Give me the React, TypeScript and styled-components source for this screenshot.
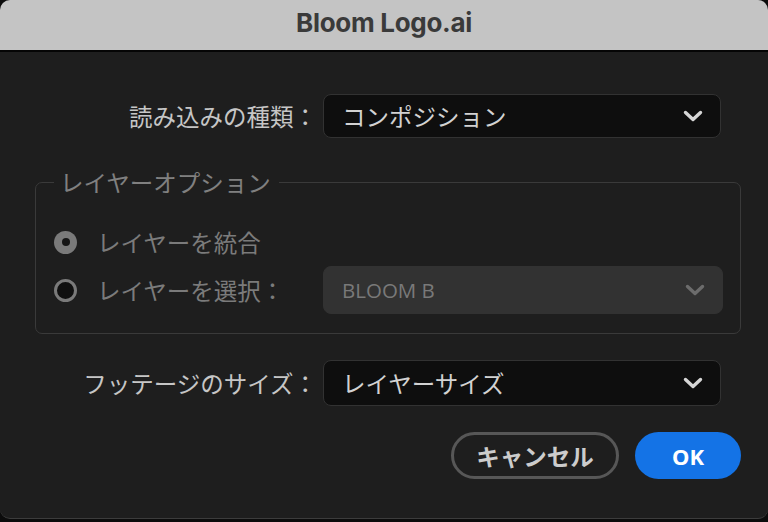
import React from 'react';
import styled, { createGlobalStyle } from 'styled-components';

const GlobalStyle = createGlobalStyle`
  html, body {
    margin: 0;
    padding: 0;
    background: #0c0c0c;
  }

  body {
    font-family: 'Noto Sans', 'Noto Sans CJK JP', sans-serif;
  }
`;

const Window = styled.div`
  width: 768px;
  height: 519px;
  box-sizing: border-box;
  background: #1e1e1e;
  border-bottom: 1px solid #3c3c3c;
  border-radius: 10px;
  overflow: hidden;

  display: flex;
  flex-direction: column;
`;

const TitleBar = styled.div`
  height: 52px;
  flex-shrink: 0;
  box-sizing: border-box;
  padding-bottom: 5px;
  background: #c4c4c4;
  border-bottom: 2px solid #050505;

  display: flex;
  justify-content: center;
  align-items: center;

  font-family: Inter, 'Noto Sans', sans-serif;
  font-size: 26px;
  font-weight: 700;
  color: #3a3a3a;
  letter-spacing: -0.3px;
`;

const Body = styled.div`
  padding: 42px 27px 0 35px;

  display: flex;
  flex-direction: column;
`;

const FieldRow = styled.div<{ $top?: number }>`
  margin-top: ${(props) => props.$top ?? 0}px;
  padding-right: 20px;

  display: flex;
  justify-content: flex-end;
  align-items: center;
  gap: 6px;
`;

const Label = styled.span<{ $dim?: boolean }>`
  font-family: 'Noto Sans CJK JP', sans-serif;
  font-size: 23.5px;
  color: ${(props) => (props.$dim ? '#7b7b7b' : '#c6c6c6')};
  white-space: nowrap;
`;

const Select = styled.div<{ $disabled?: boolean; $h?: number; $w?: number }>`
  width: ${(props) => props.$w ?? 398}px;
  height: ${(props) => props.$h ?? 44}px;
  flex-shrink: 0;
  box-sizing: border-box;
  padding: 0 17px 0 18px;

  display: flex;
  align-items: center;
  justify-content: space-between;

  background: ${(props) => (props.$disabled ? '#323232' : '#0e0e0e')};
  border: 1px solid #323232;
  border-radius: 8px;

  color: ${(props) => (props.$disabled ? '#797979' : '#d2d2d2')};
  font-family: 'Noto Sans CJK JP', sans-serif;
  font-size: 23.5px;

  svg {
    flex-shrink: 0;
  }
`;

const SelectLatin = styled.span`
  font-family: 'Open Sans', 'Noto Sans', sans-serif;
  font-size: 20.5px;
`;

const Group = styled.fieldset`
  margin: 29px 0 0 0;
  padding: 20px 17px 19px 18px;
  border: 1.5px solid #3a3a3a;
  border-radius: 7px;
  min-width: 0;

  display: flex;
  flex-direction: column;
`;

const Legend = styled.legend`
  padding: 0 8px 0 6px;
  font-family: 'Noto Sans CJK JP', sans-serif;
  font-size: 23.5px;
  color: #808080;
  line-height: 31px;
`;

const OptionRow = styled.div`
  height: 48px;

  display: flex;
  align-items: center;
  gap: 20px;
`;

const OptionSelect = styled.div`
  margin-left: auto;
`;

const Radio = styled.span<{ $checked?: boolean }>`
  width: 23px;
  height: 23px;
  box-sizing: border-box;
  border-radius: 50%;
  flex-shrink: 0;

  display: flex;
  align-items: center;
  justify-content: center;

  background: ${(props) => (props.$checked ? '#7a7a7a' : '#101010')};
  border: ${(props) => (props.$checked ? 'none' : '3.5px solid #7a7a7a')};

  &::after {
    content: '';
    width: 8px;
    height: 8px;
    border-radius: 50%;
    background: #151515;
    display: ${(props) => (props.$checked ? 'block' : 'none')};
  }
`;

const ButtonRow = styled.div`
  margin-top: 26px;

  display: flex;
  justify-content: flex-end;
  gap: 16px;
`;

const Button = styled.button<{ $primary?: boolean }>`
  width: ${(props) => (props.$primary ? '106px' : '168px')};
  height: 47px;
  box-sizing: border-box;
  padding: 0;
  border-radius: 24px;
  cursor: pointer;

  background: ${(props) => (props.$primary ? '#1473e6' : 'transparent')};
  border: ${(props) => (props.$primary ? 'none' : '3px solid #575757')};
  color: ${(props) => (props.$primary ? '#ffffff' : '#cccccc')};

  font-family: 'Noto Sans', 'Noto Sans CJK JP', sans-serif;
  font-size: ${(props) => (props.$primary ? '22px' : '23.5px')};
  font-weight: 700;
`;

const Chevron = ({ color }: { color: string }) => (
  <svg width="20" height="12" viewBox="0 0 20 12">
    <path
      d="M2.5 2.5 L10 9.5 L17.5 2.5"
      fill="none"
      stroke={color}
      strokeWidth="3.4"
      strokeLinecap="round"
      strokeLinejoin="round"
    />
  </svg>
);

const App = () => {
  return (
    <>
      <GlobalStyle />
      <Window>
        <TitleBar>Bloom Logo.ai</TitleBar>
        <Body>
          <FieldRow>
            <Label>読み込みの種類：</Label>
            <Select>
              <span>コンポジション</span>
              <Chevron color="#d6d6d6" />
            </Select>
          </FieldRow>

          <Group>
            <Legend>レイヤーオプション</Legend>
            <OptionRow>
              <Radio $checked />
              <Label $dim>レイヤーを統合</Label>
            </OptionRow>
            <OptionRow>
              <Radio />
              <Label $dim>レイヤーを選択：</Label>
              <OptionSelect>
                <Select $disabled $h={48} $w={400}>
                  <SelectLatin>BLOOM B</SelectLatin>
                  <Chevron color="#6c6c6c" />
                </Select>
              </OptionSelect>
            </OptionRow>
          </Group>

          <FieldRow $top={26}>
            <Label>フッテージのサイズ：</Label>
            <Select $h={46}>
              <span>レイヤーサイズ</span>
              <Chevron color="#d6d6d6" />
            </Select>
          </FieldRow>

          <ButtonRow>
            <Button>キャンセル</Button>
            <Button $primary>OK</Button>
          </ButtonRow>
        </Body>
      </Window>
    </>
  );
};

export default App;
